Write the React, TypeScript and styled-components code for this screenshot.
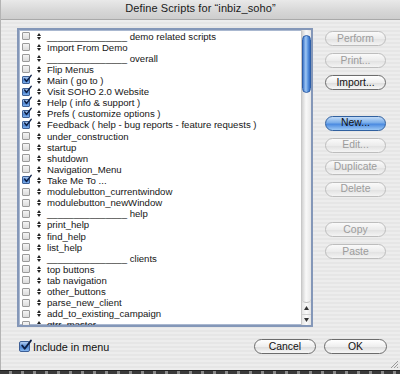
import React from 'react';
import styled, { createGlobalStyle } from 'styled-components';

const GlobalStyle = createGlobalStyle`
  html, body {
    margin: 0;
    padding: 0;
    background: #7a7a7a;
  }
  * {
    box-sizing: border-box;
  }
`;

interface Script {
  name: string;
  on?: boolean;
}

const DASH = '_______________';

const scripts: Script[] = [
  { name: `${DASH} demo related scripts` },
  { name: 'Import From Demo' },
  { name: `${DASH} overall` },
  { name: 'Flip Menus' },
  { name: 'Main ( go to )', on: true },
  { name: 'Visit SOHO 2.0 Website', on: true },
  { name: 'Help ( info & support )', on: true },
  { name: 'Prefs ( customize options )', on: true },
  { name: 'Feedback ( help - bug reports - feature requests )', on: true },
  { name: 'under_construction' },
  { name: 'startup' },
  { name: 'shutdown' },
  { name: 'Navigation_Menu' },
  { name: 'Take Me To ...', on: true },
  { name: 'modulebutton_currentwindow' },
  { name: 'modulebutton_newWindow' },
  { name: `${DASH} help` },
  { name: 'print_help' },
  { name: 'find_help' },
  { name: 'list_help' },
  { name: `${DASH} clients` },
  { name: 'top buttons' },
  { name: 'tab navigation' },
  { name: 'other_buttons' },
  { name: 'parse_new_client' },
  { name: 'add_to_existing_campaign' },
  { name: 'qtrr_master' },
];

const Window = styled.div`
  width: 400px;
  height: 370px;
  display: flex;
  flex-direction: column;
  font-family: 'Liberation Sans', Arial, sans-serif;
  color: #111;
  background: repeating-linear-gradient(
    to bottom,
    #ededed 0px,
    #ededed 2px,
    #e6e6e6 2px,
    #e6e6e6 4px
  );
  border-left: 1px solid #b4b4b4;
  position: relative;
`;

const TitleBar = styled.div`
  height: 20px;
  display: flex;
  align-items: center;
  justify-content: center;
  background: linear-gradient(to bottom, #e9e9e9, #d6d6d6 60%, #cdcdcd);
  border-bottom: 1px solid #a9a9a9;
  font-size: 11px;
  letter-spacing: 0.1px;
  color: #1a1a1a;
  padding-bottom: 3px;
`;

const Body = styled.div`
  flex: 1;
  display: flex;
  flex-direction: column;
  padding: 8px 0 0 16px;
`;

const Main = styled.div`
  display: flex;
  align-items: flex-start;
`;

const ListBox = styled.div`
  width: 296px;
  height: 299px;
  border: 2px solid #8497b8;
  box-shadow: inset 0 0 0 1px #aab8d0;
  background: #fff;
  display: flex;
  overflow: hidden;
`;

const Rows = styled.div`
  flex: 1;
  padding-top: 0.5px;
  overflow: hidden;
`;

const Row = styled.div`
  height: 11.12px;
  display: flex;
  align-items: center;
  padding-left: 3px;
  font-size: 9.6px;
  color: #161616;
  white-space: nowrap;
`;

const SmallBox = styled.span<{ $on?: boolean }>`
  width: 8px;
  height: 8px;
  flex: none;
  border: 1px solid ${p => (p.$on ? '#3d5f96' : '#9a9a9a')};
  border-radius: 1px;
  background: ${p =>
    p.$on
      ? 'linear-gradient(to bottom, #a9c8f0, #4f86d2 55%, #7fb0ec)'
      : 'linear-gradient(to bottom, #f4f4f4, #dcdcdc)'};
  display: flex;
  align-items: center;
  justify-content: center;
  overflow: visible;
`;

const Handle = styled.span`
  width: 4px;
  margin: 0 6px 0 7px;
  display: flex;
  flex: none;
`;

const Label = styled.span`
  line-height: 11px;
`;

const ScrollBar = styled.div`
  width: 10px;
  display: flex;
  flex-direction: column;
  background: linear-gradient(to right, #dcdcdc, #f6f6f6 50%, #dcdcdc);
  border-left: 1px solid #c8c8c8;
`;

const Track = styled.div`
  flex: 1;
  margin: 1px 0 0;
  display: flex;
  flex-direction: column;
  border-radius: 0 0 5px 5px;
  background: linear-gradient(to right, #d2d2d2, #f9f9f9 45%, #e6e6e6);
  border-bottom: 1px solid #bdbdbd;
`;

const Thumb = styled.div`
  height: 58px;
  margin: 4px 0 0 0;
  border-radius: 5px;
  border: 1px solid #2d5ea8;
  background: linear-gradient(to right, #3e78cc, #9fc7f4 40%, #5a95e0 70%, #2e67c0);
`;

const Arrows = styled.div`
  height: 22px;
  display: flex;
  flex-direction: column;
  background: linear-gradient(to right, #e4e4e4, #fafafa 50%, #e4e4e4);
`;

const Arrow = styled.div<{ $top?: boolean }>`
  flex: 1;
  display: flex;
  align-items: center;
  justify-content: center;
  border-top: ${p => (p.$top ? 'none' : '1px solid #cfcfcf')};
`;

const Buttons = styled.div`
  width: 61px;
  margin: 3px 0 0 12px;
  display: flex;
  flex-direction: column;
  gap: 7px;
`;

const Spacer = styled.div`
  height: 11.5px;
`;

const Button = styled.div<{ $disabled?: boolean; $default?: boolean; $wide?: number }>`
  height: 15px;
  width: ${p => p.$wide ?? 61}px;
  border-radius: 8px;
  display: flex;
  align-items: center;
  justify-content: center;
  font-size: 10.4px;
  padding-bottom: 1px;
  color: ${p => (p.$disabled ? '#9c9c9c' : '#111')};
  border: 1px solid
    ${p => (p.$default ? '#30609f' : p.$disabled ? '#bdbdbd' : '#6c6c6c')};
  background: ${p =>
    p.$default
      ? 'linear-gradient(to bottom, #c2dbf7, #78ace9 45%, #4a8ae0 55%, #9cc8f5)'
      : p.$disabled
      ? 'linear-gradient(to bottom, #fafafa, #ececec 50%, #e2e2e2 55%, #f4f4f4)'
      : 'linear-gradient(to bottom, #ffffff, #eeeeee 50%, #dedede 55%, #f7f7f7)'};
`;

const Footer = styled.div`
  display: flex;
  align-items: center;
  margin-top: 12px;
  padding-left: 2px;
`;

const BigBox = styled.span`
  width: 11px;
  height: 11px;
  border: 1px solid #3d5f96;
  border-radius: 2px;
  background: linear-gradient(to bottom, #b1cdf2, #4f86d2 55%, #86b6ee);
  display: flex;
  align-items: center;
  justify-content: center;
  overflow: visible;
`;

const Include = styled.span`
  font-size: 10.8px;
  margin-left: 3px;
  flex: 1;
`;

const FooterButtons = styled.div`
  display: flex;
  gap: 8px;
  margin-right: 13px;
`;

const Strip = styled.div`
  height: 4px;
  width: 400px;
  background: repeating-linear-gradient(
    to right,
    #3a3a3a 0px,
    #3a3a3a 9px,
    #8a8a8a 9px,
    #8a8a8a 12px
  );
  border-top: 1px solid #222;
`;

const Grip = styled.svg`
  position: absolute;
  right: 1px;
  bottom: 1px;
`;

const Check: React.FC<{ size: number }> = ({ size }) => (
  <svg width={size + 3} height={size + 3} viewBox="0 0 11 11" style={{ marginTop: -3, marginRight: -3 }}>
    <path d="M2 5.5 L4.3 8.5 L10 1" fill="none" stroke="#0d1f45" strokeWidth="1.7" strokeLinecap="round" strokeLinejoin="round" />
  </svg>
);

const Updown = () => (
  <svg width="4" height="7" viewBox="0 0 4 7">
    <path d="M2 0 L4 3 L0 3 Z M0 4 L4 4 L2 7 Z" fill="#222" />
  </svg>
);

export default function App() {
  return (
    <>
      <GlobalStyle />
      <Window>
        <TitleBar>Define Scripts for “inbiz_soho”</TitleBar>
        <Body>
          <Main>
            <ListBox>
              <Rows>
                {scripts.map(s => (
                  <Row key={s.name}>
                    <SmallBox $on={s.on}>{s.on && <Check size={7} />}</SmallBox>
                    <Handle>
                      <Updown />
                    </Handle>
                    <Label>{s.name}</Label>
                  </Row>
                ))}
              </Rows>
              <ScrollBar>
                <Track>
                  <Thumb />
                </Track>
                <Arrows>
                  <Arrow $top>
                    <svg width="5" height="4" viewBox="0 0 5 4">
                      <path d="M2.5 0 L5 4 L0 4 Z" fill="#333" />
                    </svg>
                  </Arrow>
                  <Arrow>
                    <svg width="5" height="4" viewBox="0 0 5 4">
                      <path d="M0 0 L5 0 L2.5 4 Z" fill="#333" />
                    </svg>
                  </Arrow>
                </Arrows>
              </ScrollBar>
            </ListBox>
            <Buttons>
              <Button $disabled>Perform</Button>
              <Button $disabled>Print...</Button>
              <Button>Import...</Button>
              <Spacer />
              <Button $default>New...</Button>
              <Button $disabled>Edit...</Button>
              <Button $disabled>Duplicate</Button>
              <Button $disabled>Delete</Button>
              <Spacer />
              <Button $disabled>Copy</Button>
              <Button $disabled>Paste</Button>
            </Buttons>
          </Main>
          <Footer>
            <BigBox>
              <Check size={10} />
            </BigBox>
            <Include>Include in menu</Include>
            <FooterButtons>
              <Button $wide={62}>Cancel</Button>
              <Button $wide={63}>OK</Button>
            </FooterButtons>
          </Footer>
        </Body>
        <Grip width="10" height="10" viewBox="0 0 10 10">
          <path d="M9 2 L2 9 M9 5 L5 9 M9 8 L8 9" stroke="#9a9a9a" strokeWidth="1" />
        </Grip>
      </Window>
      <Strip />
    </>
  );
}
